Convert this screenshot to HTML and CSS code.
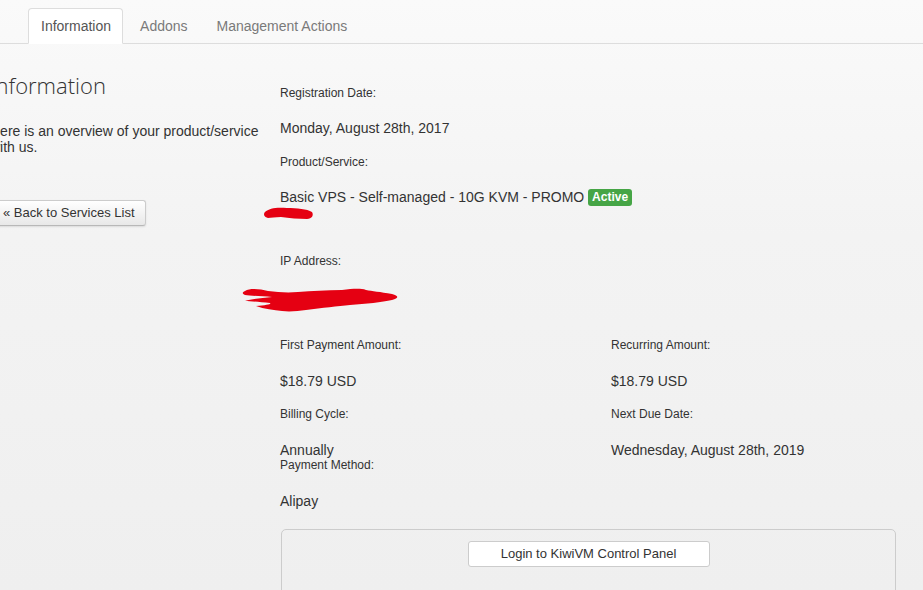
FILE: index.html
```html
<!DOCTYPE html>
<html>
<head>
<meta charset="utf-8">
<link rel="stylesheet" href="styles.css">
</head>
<body>
<div class="page">
  <ul class="tabs">
    <li class="tab active"><a>Information</a></li>
    <li class="tab"><a>Addons</a></li>
    <li class="tab"><a>Management Actions</a></li>
  </ul>
  <div class="main">
    <div class="side">
      <h1 class="title">Information</h1>
      <p class="intro">Here is an overview of your product/service with us.</p>
      <a class="btn-back">« Back to Services List</a>
    </div>
    <div class="details">
      <div class="label first">Registration Date:</div>
      <div class="value">Monday, August 28th, 2017</div>
      <div class="label">Product/Service:</div>
      <div class="value product">Basic VPS - Self-managed - 10G KVM - PROMO <span class="badge">Active</span>
        <svg class="scribble s1" width="52" height="16" viewBox="0 0 52 16"><path d="M2 6 C6 2 14 1 24 2 C34 2 44 3 49 6 C51 9 49 13 44 13 C36 13 26 12 18 11 C12 11 8 12 5 12 C1 11 0 8 2 6 Z" fill="#e50012"/></svg>
      </div>
      <div class="label ip">IP Address:</div>
      <div class="value ipval">
        <svg class="scribble s2" width="158" height="26" viewBox="0 0 158 26"><path d="M3 4 C8 1 18 2 26 4 C36 5 44 6 56 5 C70 4 84 3 100 3 C110 2 118 1 124 3 C130 4 138 5 150 7 C157 9 157 11 150 13 C140 15 124 17 108 18 C96 19 80 21 64 23 C56 24 48 25 40 24 C32 23 22 22 14 19 C24 18 30 17 28 16 C18 15 8 14 3 14 C10 12 20 11 30 10 C20 9 8 9 3 8 C0 7 0 5 3 4 Z" fill="#e50012"/></svg>
      </div>
      <div class="grid">
        <div class="col">
          <div class="label">First Payment Amount:</div>
          <div class="value">$18.79 USD</div>
          <div class="label">Billing Cycle:</div>
          <div class="value tight">Annually</div>
          <div class="label tightlabel">Payment Method:</div>
          <div class="value alipay">Alipay</div>
        </div>
        <div class="col">
          <div class="label">Recurring Amount:</div>
          <div class="value">$18.79 USD</div>
          <div class="label">Next Due Date:</div>
          <div class="value tight">Wednesday, August 28th, 2019</div>
        </div>
      </div>
      <div class="panel">
        <a class="btn-login">Login to KiwiVM Control Panel</a>
      </div>
    </div>
  </div>
</div>
</body>
</html>
```
FILE: styles.css
```css
html, body {
  margin: 0;
  padding: 0;
  height: 100%;
}
body {
  background: linear-gradient(to bottom, #fafafa 0%, #f3f3f3 40%, #efefef 100%);
  font-family: "Liberation Sans", Arial, sans-serif;
  color: #333;
  overflow: hidden;
}
.page {
  width: 923px;
}
.tabs {
  list-style: none;
  margin: 0;
  padding: 8px 0 0 28px;
  display: flex;
  border-bottom: 1px solid #dddddd;
  height: 35px;
}
.tab a {
  display: block;
  padding: 8px 11px 8px 12px;
  margin-right: 4px;
  line-height: 18px;
  font-size: 14px;
  color: #7a7a7a;
  border: 1px solid transparent;
  border-radius: 4px 4px 0 0;
}
.tab.active a {
  background: #ffffff;
  color: #555555;
  border-color: #dddddd #dddddd transparent #dddddd;
}
.main {
  display: flex;
  margin-left: -10px;
}
.side {
  width: 280px;
  flex: none;
}
.title {
  margin: 26px 0 0 0;
  font-family: "Open Sans", sans-serif;
  font-weight: 300;
  font-size: 22px;
  line-height: 30px;
  color: #333;
}
.intro {
  margin: 23px 0 0 0;
  font-size: 14px;
  line-height: 16px;
  color: #333;
}
.btn-back {
  display: inline-block;
  margin-top: 45px;
  padding: 0 10px 0 12px;
  height: 24px;
  line-height: 24px;
  font-size: 13px;
  color: #333;
  border: 1px solid #cccccc;
  border-bottom-color: #b8b8b8;
  border-radius: 3px;
  background: linear-gradient(to bottom, #ffffff, #e8e8e8);
  box-shadow: 0 1px 2px rgba(0,0,0,0.1);
}
.details {
  margin-left: 10px;
  width: 616px;
  position: relative;
}
.label {
  font-size: 12px;
  line-height: 18px;
  margin-top: 15px;
  color: #333;
}
.label.first {
  margin-top: 40px;
}
.label.ip {
  margin-top: 45px;
}
.value {
  font-size: 14px;
  line-height: 20px;
  margin-top: 16px;
  color: #333;
  position: relative;
}
.value.ipval {
  height: 20px;
}
.badge {
  display: inline-block;
  background: #46a546;
  color: #fff;
  font-weight: bold;
  font-size: 12px;
  line-height: 14px;
  padding: 1px 4px 2px;
  border-radius: 3px;
  vertical-align: 1px;
}
.scribble {
  position: absolute;
  display: block;
}
.s1 {
  left: -17px;
  top: 19px;
}
.s2 {
  left: -38px;
  top: 1px;
}
.grid {
  display: grid;
  grid-template-columns: 331px 1fr;
  margin-top: 30px;
}
.col .label:first-child {
  margin-top: 0;
}
.col .value {
  margin-top: 17px;
}
.col .label {
  margin-top: 14px;
}
.col .value.tight {
  line-height: 16px;
  margin-top: 19px;
}
.col .label.tightlabel {
  margin-top: 0;
  line-height: 14px;
}
.col .value.alipay {
  margin-top: 19px;
}
.panel {
  margin-top: 18px;
  margin-left: 1px;
  width: 613px;
  height: 120px;
  border: 1px solid #cccccc;
  border-radius: 5px;
  display: flex;
  justify-content: center;
  align-items: flex-start;
}
.btn-login {
  display: block;
  margin-top: 11px;
  width: 240px;
  height: 24px;
  line-height: 24px;
  text-align: center;
  font-size: 13px;
  color: #333;
  background: #ffffff;
  border: 1px solid #cccccc;
  border-radius: 3px;
}
```
